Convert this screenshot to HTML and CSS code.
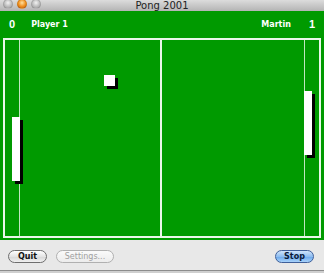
FILE: index.html
```html
<!DOCTYPE html>
<html>
<head>
<meta charset="utf-8">
<link rel="stylesheet" href="styles.css">
</head>
<body>
<div class="window">
  <div class="titlebar">
    <div class="lights">
      <span class="light gray"></span>
      <span class="light orange"></span>
      <span class="light gray"></span>
    </div>
    <div class="title">Pong 2001</div>
  </div>
  <div class="game">
    <div class="scores">
      <div class="side">
        <span class="score">0</span>
        <span class="name">Player 1</span>
      </div>
      <div class="side">
        <span class="name">Martin</span>
        <span class="score">1</span>
      </div>
    </div>
    <div class="field">
      <div class="vline left-line"></div>
      <div class="vline right-line"></div>
      <div class="center-line"></div>
      <div class="paddle paddle-left"></div>
      <div class="paddle paddle-right"></div>
      <div class="ball"></div>
    </div>
  </div>
  <div class="footer">
    <div class="btn-group">
      <button class="btn">Quit</button>
      <button class="btn disabled">Settings...</button>
    </div>
    <button class="btn primary">Stop</button>
  </div>
  <div class="edge"></div>
</div>
</body>
</html>
```
FILE: styles.css
```css
* { box-sizing: border-box; }
html, body { margin: 0; padding: 0; }
body { width: 324px; height: 273px; overflow: hidden; background: #e6e6e6; font-family: "DejaVu Sans", "Liberation Sans", sans-serif; }
.window { width: 324px; height: 273px; display: flex; flex-direction: column; }
.titlebar {
  height: 11px; position: relative; overflow: hidden;
  background: linear-gradient(#dcdcdc, #b4b4b4);
  display: flex; align-items: center; justify-content: center;
}
.lights { position: absolute; left: 3px; top: -1px; display: flex; gap: 4px; }
.light { width: 10px; height: 10px; border-radius: 50%; display: block; border: 1px solid rgba(0,0,0,0.12); }
.light.gray { background: radial-gradient(circle at 50% 35%, #f2f2f2, #b8b8b8 60%, #9a9a9a); }
.light.orange { background: radial-gradient(circle at 50% 35%, #ffe0a0, #f0901e 55%, #b85a10); }
.title { font-size: 10px; color: #222; line-height: 11px; margin-top: -1px; font-family: "DejaVu Sans", sans-serif; }
.game { height: 229px; background: #009a00; padding: 0 3px 2px 3px; display: flex; flex-direction: column; }
.scores { height: 27px; display: flex; justify-content: space-between; align-items: center; padding: 0 6px 1px 6px; color: #fff; font-weight: bold; }
.side { display: flex; align-items: center; gap: 0; }
.score { font-size: 11px; font-family: "Liberation Sans", sans-serif; }
.name { font-size: 8px; font-family: "DejaVu Sans", sans-serif; }
.side:first-child .name { margin-left: 16px; }
.side:last-child .name { margin-right: 18px; }
.field { height: 200px; border: 2px solid #eaf7ea; position: relative; }
.vline { position: absolute; top: 0; bottom: 0; width: 1px; background: #bfe6bf; }
.left-line { left: 14px; }
.right-line { left: 299px; }
.center-line { position: absolute; top: 0; bottom: 0; left: 155px; width: 2px; background: #eaf7ea; }
.paddle { position: absolute; width: 8px; height: 64px; background: #fff; box-shadow: 3px 3px 0 #000; }
.paddle-left { left: 7px; top: 77px; }
.paddle-right { left: 299px; top: 51px; }
.ball { position: absolute; left: 99px; top: 35px; width: 11px; height: 11px; background: #fff; box-shadow: 3px 3px 0 #000; }
.footer { height: 30px; display: flex; justify-content: space-between; align-items: flex-start; padding: 10px 10px 0 8px; background: #e8e8e8; }
.btn-group { display: flex; gap: 9px; }
.btn {
  height: 13px; padding: 0; border: 1px solid #6e6e6e; border-radius: 7px;
  background: linear-gradient(#ffffff, #e4e4e4 50%, #d6d6d6 51%, #f0f0f0);
  font-family: "DejaVu Sans", sans-serif; font-size: 8px; font-weight: bold; color: #111;
  line-height: 11px; width: 39px; text-align: center;
}
.btn.disabled { width: 58px; border-color: #b0b0b0; color: #a0a0a0; font-weight: normal; background: linear-gradient(#fafafa, #ececec); }
.btn.primary { width: 39px; border-color: #3f5f99; color: #0a1a3a; background: linear-gradient(#cfe4fb, #8fbdf0 50%, #6aa6ea 51%, #a8d2fa); }
.edge { height: 3px; border-top: 1px solid #8c8c8c; background: #cfcfcf; }
```
